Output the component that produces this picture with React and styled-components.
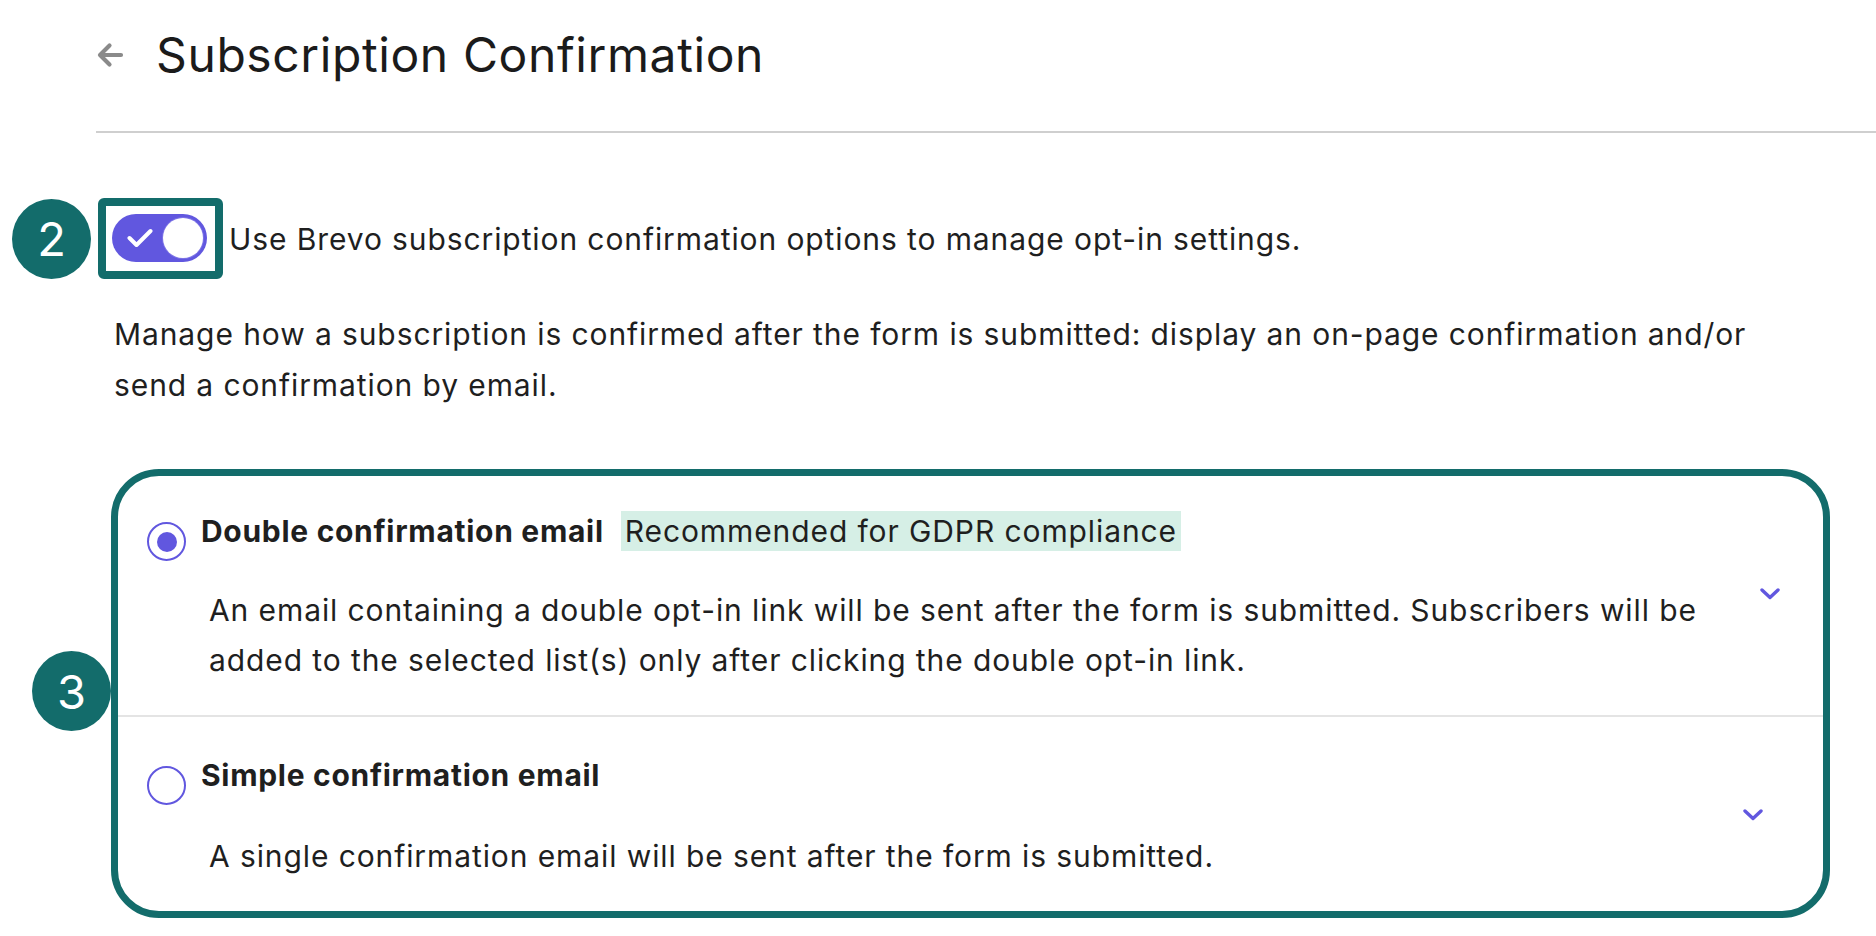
import styled, { createGlobalStyle } from 'styled-components'

const GlobalStyle = createGlobalStyle`
    * {
        box-sizing: border-box;
    }
    body {
        margin: 0;
        background: #FFF;
        font-family: Inter, "Noto Sans", sans-serif;
        color: #1f1f1f;
    }
`

const Pagina = styled.main`
    padding: 26px 0 0 96px;
    min-height: 936px;
`

const Cabecalho = styled.header`
    display: flex;
    align-items: center;
    gap: 32px;
    height: 58px;
`

const BotaoVoltar = styled.button`
    display: flex;
    align-items: center;
    justify-content: center;
    width: 28px;
    height: 28px;
    padding: 0;
    border: none;
    background: none;
    cursor: pointer;
`

const Titulo = styled.h1`
    margin: 0;
    font-size: 48px;
    line-height: 58px;
    font-weight: 400;
    color: #1b1b1b;
    letter-spacing: 0.6px;
`

const Divisor = styled.hr`
    margin: 47px 0 0;
    border: none;
    height: 2px;
    background: #cfcfcf;
`

const Conteudo = styled.section`
    padding: 0 46px 0 18px;
    font-size: 30px;
    letter-spacing: 0.9px;
`

const LinhaToggle = styled.div`
    position: relative;
    display: flex;
    align-items: center;
    gap: 4px;
    margin: 65px 0 0 -16px;
`

const Marcador = styled.span`
    position: absolute;
    left: -86px;
    top: ${props => props.$top};
    transform: ${props => props.$centro ? 'translateY(-50%)' : 'none'};
    width: 79px;
    height: 80px;
    border-radius: 50%;
    background: #136c6b;
    color: #FFF;
    font-size: 47px;
    letter-spacing: 0;
    font-weight: 400;
    display: flex;
    align-items: center;
    justify-content: center;
`

const MolduraToggle = styled.div`
    border: 8px solid #136c6b;
    border-radius: 6px;
    padding: 8px 8px 9px 6px;
    display: flex;
`

const Interruptor = styled.button`
    position: relative;
    width: 95px;
    height: 48px;
    border-radius: 24px;
    border: none;
    padding: 0 0 0 15px;
    background: #6157df;
    display: flex;
    align-items: center;
    cursor: pointer;
`

const Bolinha = styled.span`
    position: absolute;
    right: 4px;
    top: 4px;
    width: 40px;
    height: 40px;
    border-radius: 50%;
    background: #FFF;
    box-shadow: 0 0 0 1px #7d74e6;
`

const TextoToggle = styled.span`
    line-height: 40px;
    padding-left: 2px;
`

const Introducao = styled.p`
    margin: 30px 0 0;
    line-height: 51px;
`

const CartaoOpcoes = styled.div`
    position: relative;
    margin: 58px 0 0 -3px;
    border: 7px solid #136c6b;
    border-radius: 48px;
`

const Opcao = styled.div`
    display: grid;
    grid-template-columns: 39px 1fr 20px;
    column-gap: 15px;
    padding: ${props => props.$cima}px ${props => props.$direita}px 30px 29px;
    & + & {
        border-top: 2px solid #e4e4e4;
    }
`

const Radio = styled.span`
    width: 39px;
    height: 39px;
    margin-top: 10px;
    border-radius: 50%;
    border: 2.5px solid #6157df;
    display: flex;
    align-items: center;
    justify-content: center;
    &::after {
        content: '';
        width: 20px;
        height: 20px;
        border-radius: 50%;
        background: ${props => props.$marcado ? '#6157df' : 'transparent'};
    }
`

const CorpoOpcao = styled.div`
    display: flex;
    flex-direction: column;
    gap: ${props => props.$espaco}px;
`

const LinhaTitulo = styled.div`
    display: flex;
    align-items: center;
    gap: 17px;
    height: 38px;
`

const TituloOpcao = styled.strong`
    font-weight: 700;
    line-height: 38px;
    letter-spacing: 0.7px;
`

const Etiqueta = styled.span`
    background: #d6efe6;
    line-height: 40px;
    padding: 0 4px;
`

const Descricao = styled.p`
    margin: 0;
    padding-left: 8px;
    line-height: 50px;
`

const Seta = styled.span`
    align-self: center;
    display: flex;
    justify-content: center;
    margin-top: ${props => props.$topo}px;
`

function IconeVoltar() {
    return (
        <svg width="28" height="26" viewBox="0 0 28 26" fill="none">
            <path d="M25 13H4.5M13.5 3.5L4 13L13.5 22.5" stroke="#8a8a8a" strokeWidth="4.2" strokeLinecap="round" strokeLinejoin="round" />
        </svg>
    )
}

function IconeCheck() {
    return (
        <svg width="26" height="20" viewBox="0 0 26 20" fill="none">
            <path d="M2.5 10L9.5 17L23.5 3" stroke="#FFF" strokeWidth="4" strokeLinecap="round" strokeLinejoin="round" />
        </svg>
    )
}

function IconeSeta() {
    return (
        <svg width="20" height="12" viewBox="0 0 20 12" fill="none">
            <path d="M2 2L10 9.5L18 2" stroke="#6157df" strokeWidth="3.4" strokeLinecap="round" strokeLinejoin="round" />
        </svg>
    )
}

const opcoes = [
    {
        titulo: 'Double confirmation email',
        etiqueta: 'Recommended for GDPR compliance',
        linhas: [
            'An email containing a double opt-in link will be sent after the form is submitted. Subscribers will be',
            'added to the selected list(s) only after clicking the double opt-in link.'
        ],
        marcado: true,
        cima: 36,
        espaco: 35,
        direita: 43,
        topo: -9
    },
    {
        titulo: 'Simple confirmation email',
        linhas: ['A single confirmation email will be sent after the form is submitted.'],
        marcado: false,
        cima: 39,
        espaco: 37,
        direita: 60,
        topo: -8
    }
]

function App() {
    return (
        <>
            <GlobalStyle />
            <Pagina>
                <Cabecalho>
                    <BotaoVoltar aria-label="Voltar"><IconeVoltar /></BotaoVoltar>
                    <Titulo>Subscription Confirmation</Titulo>
                </Cabecalho>
                <Divisor />
                <Conteudo>
                    <LinhaToggle>
                        <Marcador $top="50%" $centro>2</Marcador>
                        <MolduraToggle>
                            <Interruptor aria-pressed="true">
                                <IconeCheck />
                                <Bolinha />
                            </Interruptor>
                        </MolduraToggle>
                        <TextoToggle>Use Brevo subscription confirmation options to manage opt-in settings.</TextoToggle>
                    </LinhaToggle>
                    <Introducao>
                        Manage how a subscription is confirmed after the form is submitted: display an on-page confirmation and/or
                        <br />
                        send a confirmation by email.
                    </Introducao>
                    <CartaoOpcoes>
                        <Marcador $top="175px">3</Marcador>
                        {opcoes.map(opcao => (
                            <Opcao key={opcao.titulo} $cima={opcao.cima} $direita={opcao.direita}>
                                <Radio $marcado={opcao.marcado} />
                                <CorpoOpcao $espaco={opcao.espaco}>
                                    <LinhaTitulo>
                                        <TituloOpcao>{opcao.titulo}</TituloOpcao>
                                        {opcao.etiqueta && <Etiqueta>{opcao.etiqueta}</Etiqueta>}
                                    </LinhaTitulo>
                                    <Descricao>
                                        {opcao.linhas.map((linha, i) => (
                                            <span key={i}>{linha}{i < opcao.linhas.length - 1 && <br />}</span>
                                        ))}
                                    </Descricao>
                                </CorpoOpcao>
                                <Seta $topo={opcao.topo}><IconeSeta /></Seta>
                            </Opcao>
                        ))}
                    </CartaoOpcoes>
                </Conteudo>
            </Pagina>
        </>
    )
}

export default App
